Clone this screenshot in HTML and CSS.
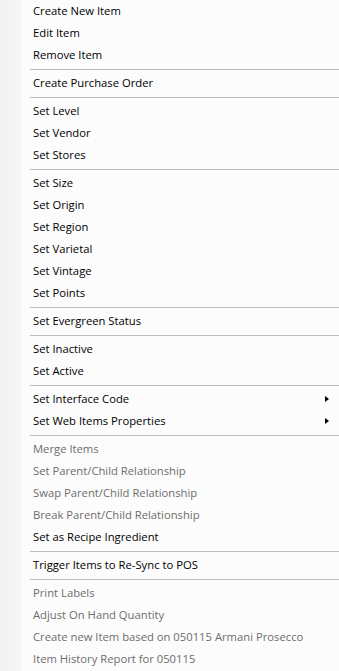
FILE: index.html
```html
<!DOCTYPE html>
<html lang="en">
<head>
    <meta charset="UTF-8">
    <title>Item Menu</title>
    <link rel="stylesheet" href="styles.css">
</head>
<body>
    <div class="menu">
        <div class="item">Create New Item</div>
        <div class="item">Edit Item</div>
        <div class="item">Remove Item</div>
        <div class="sep"></div>
        <div class="item">Create Purchase Order</div>
        <div class="sep"></div>
        <div class="item">Set Level</div>
        <div class="item">Set Vendor</div>
        <div class="item">Set Stores</div>
        <div class="sep"></div>
        <div class="item">Set Size</div>
        <div class="item">Set Origin</div>
        <div class="item">Set Region</div>
        <div class="item">Set Varietal</div>
        <div class="item">Set Vintage</div>
        <div class="item">Set Points</div>
        <div class="sep"></div>
        <div class="item">Set Evergreen Status</div>
        <div class="sep"></div>
        <div class="item">Set Inactive</div>
        <div class="item">Set Active</div>
        <div class="sep"></div>
        <div class="item has-sub">Set Interface Code<span class="arrow"></span></div>
        <div class="item has-sub">Set Web Items Properties<span class="arrow"></span></div>
        <div class="sep"></div>
        <div class="item disabled">Merge Items</div>
        <div class="item disabled">Set Parent/Child Relationship</div>
        <div class="item disabled">Swap Parent/Child Relationship</div>
        <div class="item disabled">Break Parent/Child Relationship</div>
        <div class="item">Set as Recipe Ingredient</div>
        <div class="sep"></div>
        <div class="item">Trigger Items to Re-Sync to POS</div>
        <div class="sep"></div>
        <div class="item disabled">Print Labels</div>
        <div class="item disabled">Adjust On Hand Quantity</div>
        <div class="item disabled">Create new Item based on 050115 Armani Prosecco</div>
        <div class="item disabled">Item History Report for 050115</div>
    </div>
</body>
</html>
```

FILE: styles.css
```css
body {
    margin: 0;
    background-color: #fcfcfc;
    font-family: "Open Sans", "Noto Sans", sans-serif;
    font-size: 11.25px;
}
.menu {
    background: linear-gradient(to right, #f1f1f1 0, #f6f6f6 21px, #fcfcfc 22px);
    min-height: 671px;
}
.item {
    display: flex;
    align-items: center;
    height: 22px;
    padding-left: 33px;
    padding-right: 10px;
    color: #000;
    line-height: 1;
    padding-bottom: 1px;
    box-sizing: border-box;
}
.item.disabled {
    color: #6d6d6d;
}
.has-sub {
    justify-content: space-between;
}
.arrow {
    width: 0;
    height: 0;
    border-top: 3.5px solid transparent;
    border-bottom: 3.5px solid transparent;
    border-left: 4px solid #000;
}
.sep {
    height: 6px;
    margin-left: 30px;
    display: flex;
    align-items: center;
}
.sep::after {
    content: "";
    display: block;
    width: 100%;
    height: 1px;
    background-color: #bdbdbd;
}
```
